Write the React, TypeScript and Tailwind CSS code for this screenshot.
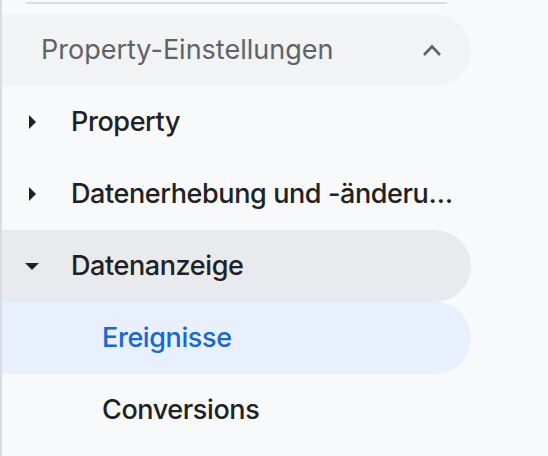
import { type ReactNode } from "react";

function ArrowRight() {
  return (
    <svg viewBox="0 0 7 14" className="h-[14px] w-[7px]" fill="#202124">
      <path d="M0 0l7 7-7 7z" />
    </svg>
  );
}

function ArrowDown() {
  return (
    <svg viewBox="0 0 14 7" className="h-[7px] w-[14px]" fill="#202124">
      <path d="M0 0h14l-7 7z" />
    </svg>
  );
}

function ChevronUp() {
  return (
    <svg
      viewBox="0 0 20 14"
      className="h-[14px] w-[20px]"
      fill="none"
      stroke="#5f6368"
      strokeWidth="2.6"
    >
      <path d="M2 12l8-8.5 8 8.5" />
    </svg>
  );
}

function Row({
  icon,
  children,
  className = "",
}: {
  icon?: ReactNode;
  children: ReactNode;
  className?: string;
}) {
  return (
    <div
      className={`flex h-[72px] w-[469px] items-center rounded-r-full pr-[17px] font-medium tracking-[-0.4px] ${className}`}
    >
      <div className="flex w-[60px] shrink-0 items-center justify-center">
        {icon}
      </div>
      <span className="ml-[9px] truncate">{children}</span>
    </div>
  );
}

export default function App() {
  return (
    <div
      className="h-[456px] w-[548px] overflow-hidden border-l-2 border-[#dadce0] bg-[#f8f9fa] text-[27px] text-[#202124]"
      style={{ fontFamily: "Inter, Roboto, sans-serif" }}
    >
      <div className="ml-[24px] mt-[2px] h-[2px] w-[421px] bg-[#dadce0]" />
      <div className="mt-[10px] flex h-[72px] w-[469px] items-center justify-between rounded-r-full bg-[#f1f3f4] pl-[39px] pr-[29px] text-[#5f6368]">
        <span>Property-Einstellungen</span>
        <ChevronUp />
      </div>
      <Row icon={<ArrowRight />}>Property</Row>
      <Row icon={<ArrowRight />}>Datenerhebung und -änderungen</Row>
      <Row icon={<ArrowDown />} className="bg-[#e8eaed]">
        Datenanzeige
      </Row>
      <div className="flex h-[72px] w-[469px] items-center rounded-r-full bg-[#e8f0fe] pl-[100px] font-medium tracking-[-0.4px] text-[#1967d2]">
        Ereignisse
      </div>
      <div className="flex h-[72px] w-[469px] items-center pl-[100px] font-medium tracking-[-0.4px]">
        Conversions
      </div>
    </div>
  );
}
